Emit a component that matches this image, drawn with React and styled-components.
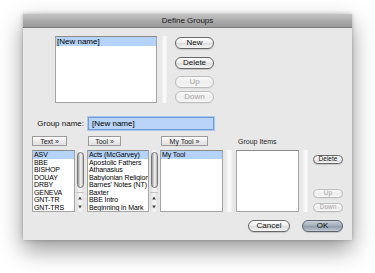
import styled, { createGlobalStyle } from "styled-components"

const Global = createGlobalStyle`
    html, body {
        margin: 0;
        padding: 0;
        background: #ffffff;
    }
    body {
        font-family: "Liberation Sans", Arial, sans-serif;
        color: #111;
    }
`

const Page = styled.div`
    width: 375px;
    height: 273px;
    padding: 14px 0 0 23px;
    box-sizing: border-box;
    overflow: hidden;
`

const Window = styled.div`
    width: 329px;
    height: 226px;
    background: #e8e8e8;
    display: flex;
    flex-direction: column;
    box-shadow: 0 10px 22px rgba(0, 0, 0, 0.4), 0 0 4px rgba(0, 0, 0, 0.25);
`

const TitleBar = styled.div`
    height: 14px;
    flex: none;
    display: flex;
    align-items: center;
    justify-content: center;
    font-size: 8px;
    color: #1a1a1a;
    background: linear-gradient(#c4c4c4, #a8a8a8 60%, #9a9a9a);
    border-bottom: 1px solid #7c7c7c;
    box-sizing: border-box;
`

const Body = styled.div`
    flex: 1;
    display: flex;
    flex-direction: column;
    padding-top: 8px;
`

const TopRow = styled.div`
    display: flex;
    padding-left: 32px;
    height: 67px;
`

const ListBox = styled.div`
    width: ${p => p.$w}px;
    height: ${p => p.$h}px;
    flex: none;
    background: #fff;
    border: 1px solid #a4a4a4;
    border-top-color: #8c8c8c;
    box-sizing: border-box;
    overflow: hidden;
    font-size: 7px;
    line-height: 7.5px;
    letter-spacing: -0.1px;
    color: #000;
`

const ListItem = styled.div`
    padding-left: 1px;
    white-space: nowrap;
    overflow: hidden;
    background: ${p => (p.$selected ? "#b5d3f7" : "transparent")};
`

const TopItem = styled(ListItem)`
    font-size: 8px;
    line-height: 9px;
    letter-spacing: 0;
`

const Strip = styled.div`
    width: ${p => p.$w}px;
    margin-left: ${p => p.$gap}px;
    height: ${p => p.$h}px;
    flex: none;
    background: linear-gradient(to right, #eeeeee, #fbfbfb 50%, #f0f0f0);
`

const ButtonStack = styled.div`
    display: flex;
    flex-direction: column;
    margin-left: 8px;
    padding-top: 1px;
`

const Pill = styled.button`
    width: ${p => p.$w}px;
    height: ${p => p.$h}px;
    margin-top: ${p => p.$top || 0}px;
    padding: 0;
    border-radius: 7px;
    font-family: "Liberation Sans", Arial, sans-serif;
    font-size: ${p => p.$size}px;
    line-height: 1;
    color: ${p => (p.disabled ? "#a6a6a6" : "#111")};
    border: 1px solid ${p => (p.disabled ? "#bdbdbd" : "#676767")};
    background: ${p =>
        p.disabled
            ? "linear-gradient(#fbfbfb, #eeeeee 50%, #f6f6f6)"
            : "linear-gradient(#ffffff, #ececec 50%, #dedede 55%, #f7f7f7)"};
    box-shadow: 0 1px 1px rgba(0, 0, 0, ${p => (p.disabled ? 0.05 : 0.15)});
    box-sizing: border-box;
    flex: none;
`

const DefaultPill = styled(Pill)`
    border-color: #5d6670;
    background: linear-gradient(#c9d0d8, #9eabb9 50%, #8f9cab 55%, #c0c9d3);
`

const Columns = styled.div`
    display: grid;
    grid-template-columns: 55px 73px 76px 77px 30px;
    padding-left: 9px;
    margin-top: ${p => p.$top}px;
    height: ${p => p.$h}px;
`

const Label = styled.div`
    font-size: 8px;
    display: flex;
    align-items: center;
    justify-content: flex-end;
    padding-right: 3px;
    white-space: nowrap;
    color: #111;
`

const NameInput = styled.div`
    grid-column: 2 / 4;
    margin-left: 1px;
    width: 126px;
    height: 13px;
    box-sizing: border-box;
    border: 1px solid #6f9bd6;
    box-shadow: 0 0 0 1px #a9c6ec;
    background: #b9d4f6;
    font-size: 8px;
    line-height: 11px;
    padding-left: 3px;
    color: #000;
`

const Bevel = styled.button`
    width: ${p => p.$w}px;
    height: 10px;
    margin-left: ${p => p.$left || 0}px;
    padding: 0;
    font-family: "Liberation Sans", Arial, sans-serif;
    font-size: 7px;
    line-height: 1;
    color: #1a1a1a;
    border: 1px solid #9b9b9b;
    border-radius: 0;
    background: linear-gradient(#fdfdfd, #eaeaea 55%, #e2e2e2);
    box-sizing: border-box;
`

const HeadLabel = styled.div`
    margin-left: 2px;
    font-size: 7px;
    display: flex;
    align-items: center;
    color: #1e1e1e;
    white-space: nowrap;
`

const Cell = styled.div`
    display: flex;
    align-items: flex-start;
`

const SideButtons = styled.div`
    display: flex;
    flex-direction: column;
    padding-top: 5px;
`

const ScrollTrack = styled.div`
    width: 8px;
    height: 62px;
    margin-left: 1px;
    flex: none;
    display: flex;
    flex-direction: column;
    align-items: center;
    box-sizing: border-box;
    background: linear-gradient(to right, #dcdcdc, #f7f7f7 50%, #e2e2e2);
`

const Thumb = styled.div`
    width: 7px;
    height: 36px;
    margin-top: 2px;
    border-radius: 4px;
    border: 1px solid #777;
    box-sizing: border-box;
    background: linear-gradient(to right, #9c9c9c, #e6e6e6 45%, #f4f4f4 60%, #b4b4b4);
`

const ArrowBox = styled.div`
    width: 8px;
    height: 10px;
    display: flex;
    align-items: center;
    justify-content: center;
    border-top: ${p => (p.$line ? "1px solid #c4c4c4" : "none")};
    box-sizing: border-box;
`

const Spacer = styled.div`
    flex: 1;
`

const Footer = styled.div`
    display: flex;
    justify-content: flex-end;
    gap: 12px;
    padding-right: 9px;
    margin-top: 8px;
`

const Arrow = ({ up }) => (
    <svg width="4" height="4" viewBox="0 0 4 4">
        <path d={up ? "M2 0.5 L3.8 3.5 L0.2 3.5 Z" : "M0.2 0.5 L3.8 0.5 L2 3.5 Z"} fill="#444" />
    </svg>
)

const Scrollbar = () => (
    <ScrollTrack>
        <Thumb />
        <Spacer />
        <ArrowBox $line><Arrow up /></ArrowBox>
        <ArrowBox><Arrow /></ArrowBox>
    </ScrollTrack>
)

const texts = ["ASV", "BBE", "BISHOP", "DOUAY", "DRBY", "GENEVA", "GNT-TR", "GNT-TRS"]
const tools = [
    "Acts (McGarvey)",
    "Apostolic Fathers",
    "Athanasius",
    "Babylonian Religion",
    "Barnes' Notes (NT)",
    "Baxter",
    "BBE Intro",
    "Beginning in Mark",
]

const App = () => {
    return <Page>
        <Global />
        <Window>
            <TitleBar>Define Groups</TitleBar>
            <Body>
                <TopRow>
                    <ListBox $w={102} $h={67}>
                        <TopItem $selected>[New name]</TopItem>
                    </ListBox>
                    <Strip $w={5} $gap={5} $h={67} />
                    <ButtonStack>
                        <Pill $w={39} $h={12} $size={8}>New</Pill>
                        <Pill $w={39} $h={12} $size={8} $top={8}>Delete</Pill>
                        <Pill $w={39} $h={12} $size={8} $top={7} disabled>Up</Pill>
                        <Pill $w={39} $h={12} $size={8} $top={3} disabled>Down</Pill>
                    </ButtonStack>
                </TopRow>

                <Columns $top={14} $h={13}>
                    <Label>Group name:</Label>
                    <NameInput>[New name]</NameInput>
                </Columns>

                <Columns $top={6} $h={10}>
                    <Cell><Bevel $w={35}>Text »</Bevel></Cell>
                    <Cell><Bevel $w={33} $left={1}>Tool »</Bevel></Cell>
                    <Cell><Bevel $w={47} $left={1}>My Tool »</Bevel></Cell>
                    <HeadLabel>Group Items</HeadLabel>
                </Columns>

                <Columns $top={4} $h={62}>
                    <Cell>
                        <ListBox $w={43} $h={62}>
                            {texts.map((t, i) => <ListItem key={t} $selected={i === 0}>{t}</ListItem>)}
                        </ListBox>
                        <Scrollbar />
                    </Cell>
                    <Cell>
                        <ListBox $w={62} $h={62}>
                            {tools.map((t, i) => <ListItem key={t} $selected={i === 0}>{t}</ListItem>)}
                        </ListBox>
                        <Scrollbar />
                    </Cell>
                    <Cell>
                        <ListBox $w={63} $h={62}>
                            <ListItem $selected>My Tool</ListItem>
                        </ListBox>
                        <Strip $w={6} $gap={3} $h={62} />
                    </Cell>
                    <Cell>
                        <ListBox $w={63} $h={62} />
                        <Strip $w={5} $gap={4} $h={62} />
                    </Cell>
                    <SideButtons>
                        <Pill $w={30} $h={9} $size={6.5}>Delete</Pill>
                        <Pill $w={30} $h={9} $size={6.5} $top={25} disabled>Up</Pill>
                        <Pill $w={30} $h={9} $size={6.5} $top={5} disabled>Down</Pill>
                    </SideButtons>
                </Columns>

                <Footer>
                    <Pill $w={42} $h={12} $size={8}>Cancel</Pill>
                    <DefaultPill $w={41} $h={12} $size={8}>OK</DefaultPill>
                </Footer>
            </Body>
        </Window>
    </Page>
}

export default App
